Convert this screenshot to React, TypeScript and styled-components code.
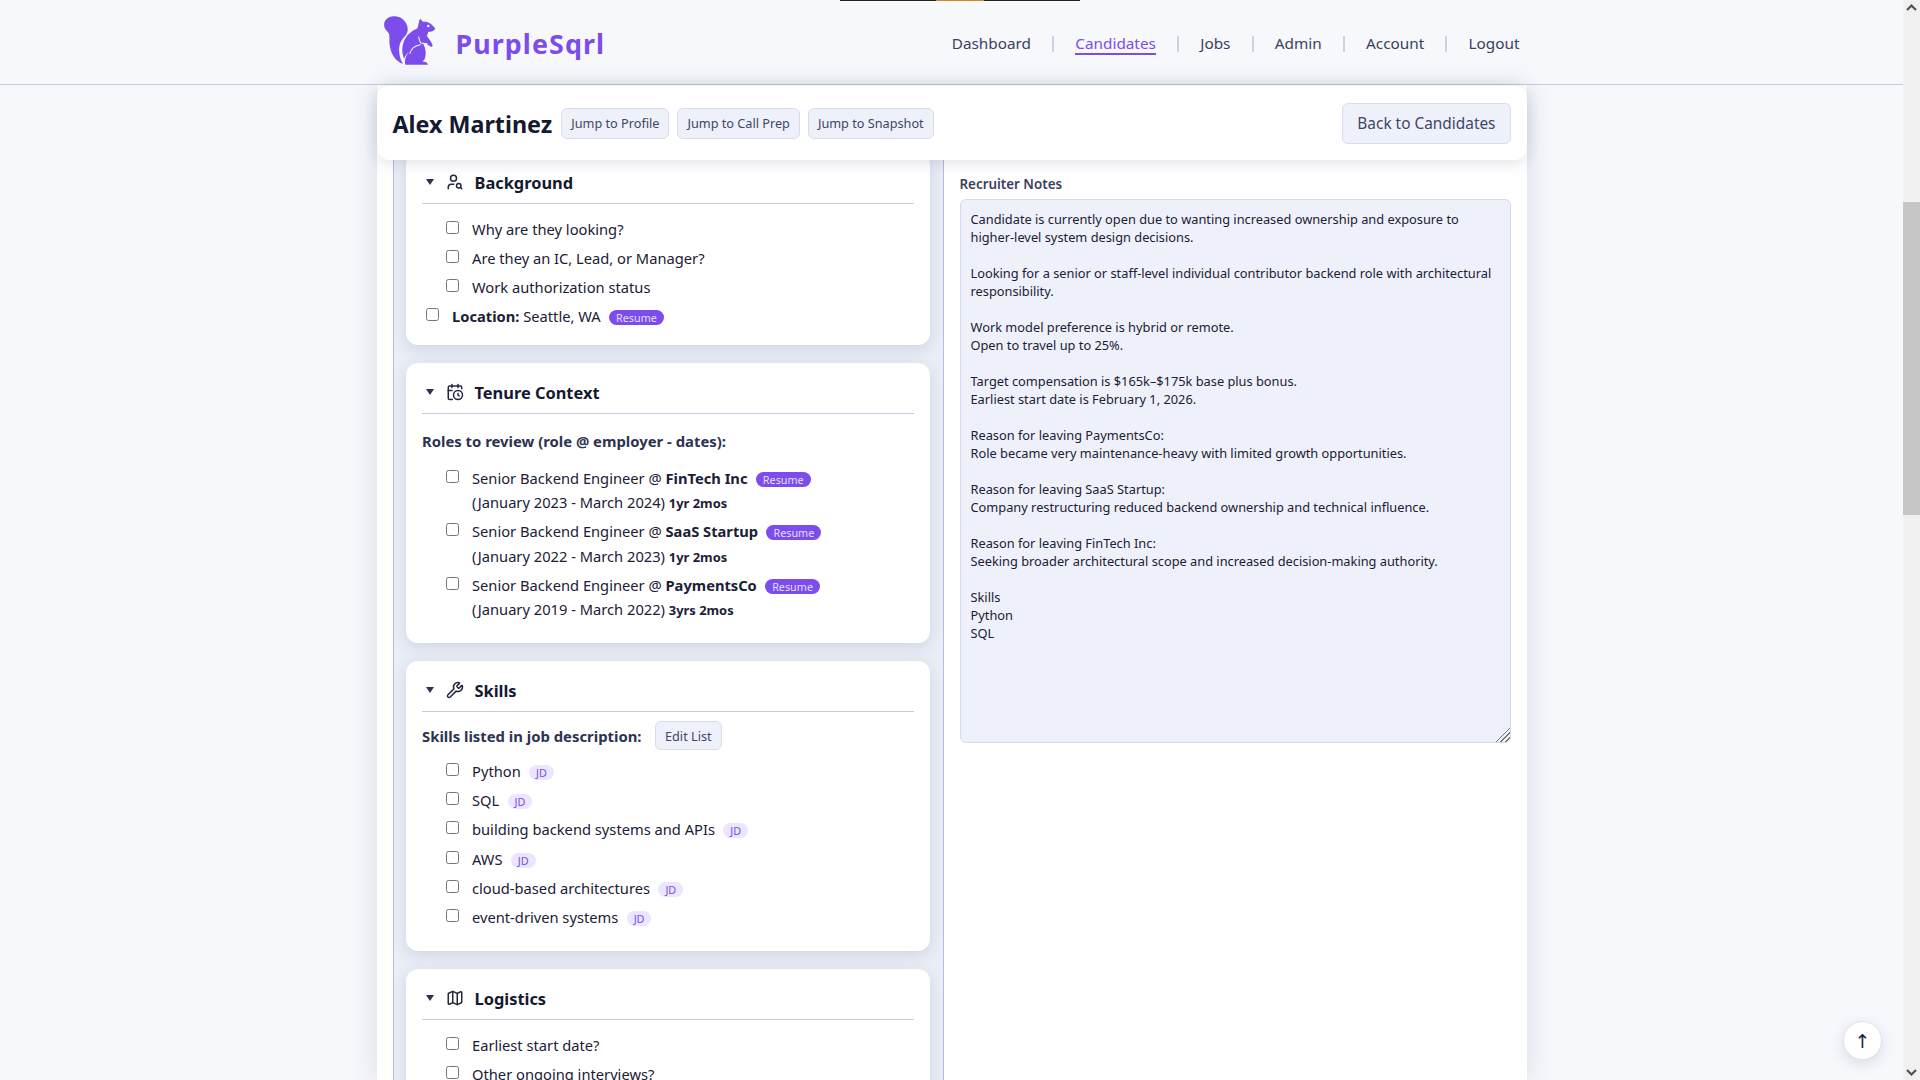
import React from 'react';
import styled, { createGlobalStyle } from 'styled-components';
import { CalendarClock, Map as MapIcon, UserSearch, Wrench } from 'lucide-react';

const GlobalStyle = createGlobalStyle`
  html, body {
    margin: 0;
    height: 100%;
    overflow: hidden;
    background: #f6f8fc;
    font-family: "Noto Sans", "Open Sans", sans-serif;
    color: #1b2036;
  }
`;

const Shell = styled.div`
  display: flex;
  height: 100vh;
`;

const Viewport = styled.div`
  flex: 1;
  min-width: 0;
  display: flex;
  flex-direction: column;
`;

const RecorderBar = styled.div`
  position: absolute;
  top: 0;
  left: 840px;
  width: 240px;
  height: 1px;
  background: linear-gradient(90deg, #222 0 96px, #d08a1d 96px 144px, #222 144px);
`;

const TopBar = styled.header`
  flex: none;
  height: 84px;
  border-bottom: 1px solid #c5cbe3;
  background: #f6f8fc;
`;

const TopBarInner = styled.div`
  max-width: 1136px;
  height: 100%;
  margin: 0 auto;
  display: flex;
  align-items: center;
  justify-content: space-between;
`;

const Brand = styled.div`
  display: flex;
  align-items: center;
  gap: 20px;
  color: #7c4dea;
  margin-top: -4px;
`;

const BrandName = styled.span`
  font-size: 26.8px;
  font-weight: 700;
  letter-spacing: 1.1px;
  margin-top: 6px;
`;

const Nav = styled.nav`
  display: flex;
  align-items: center;
  margin-top: 3px;
`;

const NavLink = styled.a<{ $active?: boolean }>`
  font-size: 15.3px;
  line-height: 20px;
  color: ${(p) => (p.$active ? '#7c4dea' : '#3a4060')};
  border-bottom: 2px solid ${(p) => (p.$active ? '#7c4dea' : 'transparent')};
  cursor: pointer;
`;

const NavDivider = styled.span`
  width: 2px;
  height: 16px;
  margin: 0 21.2px;
  background: #cdd2e6;
`;

const Panel = styled.main`
  flex: 1;
  min-height: 0;
  width: 1150px;
  margin: 0 auto;
  display: flex;
  flex-direction: column;
  background: #fff;
  box-shadow: 0 4px 28px rgba(40, 50, 90, 0.14);
`;

const TitleCard = styled.div`
  flex: none;
  position: relative;
  z-index: 2;
  height: 74px;
  margin-top: 1px;
  padding: 0 16px;
  display: flex;
  align-items: center;
  gap: 8px;
  background: #fff;
  border-radius: 12px;
  box-shadow: 0 2px 16px rgba(40, 50, 90, 0.16);
`;

const CandidateName = styled.h1`
  margin: 2px 1px 0 0;
  font-size: 23.3px;
  font-weight: 700;
  color: #14192f;
`;

const Button = styled.button<{ $size?: 'sm' | 'lg' }>`
  height: ${(p) => (p.$size === 'lg' ? '41px' : p.$size === 'sm' ? '29px' : '31px')};
  margin-left: ${(p) => (p.$size === 'lg' ? 'auto' : '0')};
  padding: 0 ${(p) => (p.$size === 'lg' ? '14px' : '9px')};
  font-family: inherit;
  font-size: ${(p) => (p.$size === 'lg' ? '15.4px' : '12.7px')};
  color: #3f4666;
  background: #eef1f9;
  border: 1px solid #d8ddec;
  border-radius: 6px;
  white-space: nowrap;
`;

const Columns = styled.div`
  flex: 1;
  min-height: 0;
  padding: 0 16px;
  display: flex;
  gap: 16px;
`;

const ChecklistColumn = styled.section`
  flex: none;
  width: 551px;
  box-sizing: border-box;
  padding: 0 12.5px;
  overflow: hidden;
  display: flex;
  flex-direction: column;
  gap: 18.5px;
  background: #eaeef6;
  border-left: 1px solid #b9b6e8;
  border-right: 1px solid #b9b6e8;
`;

const Section = styled.article`
  flex: none;
  padding: 16px 16px 11px;
  background: #fff;
  border-radius: 12px;
  box-shadow: 0 4px 16px rgba(50, 60, 100, 0.14);

  &:first-child {
    margin-top: -7px;
  }
`;

const SectionHeader = styled.div`
  height: 26px;
  padding-bottom: 8px;
  display: flex;
  align-items: center;
  border-bottom: 1px solid #c5cadf;
  color: #232840;
`;

const Caret = styled.span`
  width: 0;
  height: 0;
  margin: 0 11.5px 0 4px;
  border-left: 4px solid transparent;
  border-right: 4px solid transparent;
  border-top: 6px solid #2c3350;
`;

const SectionTitle = styled.h2`
  margin: 0 0 0 11px;
  font-size: 16.4px;
  font-weight: 700;
  color: #14192f;
`;

const Lead = styled.div<{ $tight?: boolean }>`
  display: flex;
  align-items: center;
  gap: 13.5px;
  margin-top: ${(p) => (p.$tight ? '9px' : '15px')};
  min-height: 24px;
  font-size: 14.85px;
  font-weight: 700;
  color: #2c3350;
`;

const List = styled.ul<{ $top?: number }>`
  margin: ${(p) => p.$top ?? 13}px 0 0;
  padding: 0 0 0 20px;
  list-style: none;

  &:last-child {
    margin-bottom: 10.5px;
  }
`;

const Row = styled.li`
  display: flex;
  align-items: flex-start;
  margin-bottom: 5px;
  font-size: 14.7px;
  line-height: 24.16px;
`;

const LooseRow = styled(Row).attrs({ as: 'div' })``;

const Check = styled.input.attrs({ type: 'checkbox' })`
  flex: none;
  width: 13px;
  height: 13px;
  margin: 4px 13px 0 4px;
`;

const Tag = styled.span<{ $kind: 'resume' | 'jd' }>`
  display: inline-block;
  margin-left: 4.5px;
  padding: 0 7px;
  font-size: 10.8px;
  line-height: 15px;
  vertical-align: 0;
  border-radius: 8px;
  color: ${(p) => (p.$kind === 'resume' ? '#e6deff' : '#7c4dea')};
  background: ${(p) => (p.$kind === 'resume' ? '#7c4dea' : '#ebe5fd')};
`;

const Tenure = styled.strong`
  font-size: 12.9px;
  line-height: 1;
`;

const NotesColumn = styled.section`
  flex: none;
  width: 551px;
  padding-top: 14px;
`;

const NotesLabel = styled.label`
  display: block;
  height: 25px;
  line-height: 20px;
  font-size: 13.4px;
  font-weight: 600;
  color: #3a4060;
`;

const NotesArea = styled.textarea`
  display: block;
  width: 100%;
  height: 544px;
  box-sizing: border-box;
  padding: 10px;
  font-family: inherit;
  font-size: 12.8px;
  line-height: 18px;
  color: #1b2036;
  background: #eef1f9;
  border: 1px solid #d5daea;
  border-radius: 6px;
  outline: none;

  &::-webkit-resizer {
    background:
      linear-gradient(135deg, #eef1f9 50%, transparent 50%),
      repeating-linear-gradient(135deg, #777 0 1.500px, #eef1f9 1.500px 3.500px);
  }
`;

const ToTop = styled.button`
  position: absolute;
  left: 1843px;
  top: 1021px;
  width: 39px;
  height: 39px;
  padding: 0;
  font-family: "DejaVu Sans", sans-serif;
  font-size: 19px;
  color: #20263e;
  background: #fff;
  border: 1px solid #dfe3f0;
  border-radius: 50%;
  box-shadow: 0 4px 14px rgba(40, 50, 90, 0.14);
`;

const Scrollbar = styled.div`
  flex: none;
  width: 17px;
  height: 100%;
  display: flex;
  flex-direction: column;
  background: #f1f1f1;
`;

const ScrollArrow = styled.svg`
  flex: none;
  display: block;
  width: 17px;
  height: 17px;
`;

const ScrollTrack = styled.div`
  flex: 1;
`;

const ScrollThumb = styled.div`
  height: 313px;
  margin-top: 185px;
  background: #c6c6c6;
`;

const SquirrelLogo = () => (
  <svg width="52" height="49" viewBox="0 0 150 142" fill="currentColor" aria-hidden="true">
    <path d="M32 1C14-1 0 10 0 26c0 11 8 17 13 23 5 9 0 22 4 40 4 22 15 41 38 50-9-14-13-31-11-49 2-18 12-26 20-36 8-12 5-30-7-42C50 5 42 2 32 1Z" />
    <path d="M104 8l9 9c12-3 25 5 35 19-2 6-10 10-20 10l-4 12c5 8 13 16 17 28l-5 4c-6-6-13-10-24-12 8 14 12 30 5 48l-6 6c8 0 14 2 16 9H62c-4-11 0-26 10-37-6 4-12 12-14 20-6-14-8-32 0-52 6-16 22-30 38-36 4-8 4-20 8-28Z" />
    <circle cx="128" cy="29" r="3.5" fill="#f6f8fc" />
    <path d="M100 60c2 8 3 14 6 18 6 1 14 1 20 3" fill="none" stroke="#f6f8fc" strokeWidth="3" />
    <path d="M74 110c4-16 16-25 32-27" fill="none" stroke="#f6f8fc" strokeWidth="3" />
  </svg>
);

const ChevronUp = () => (
  <ScrollArrow viewBox="0 0 17 17">
    <path d="M4 10l4.500-4.500L13 10" fill="none" stroke="#505050" strokeWidth="2.2" />
  </ScrollArrow>
);

const ChevronDown = () => (
  <ScrollArrow viewBox="0 0 17 17">
    <path d="M4 7l4.500 4.500L13 7" fill="none" stroke="#505050" strokeWidth="2.2" />
  </ScrollArrow>
);

const navItems = ['Dashboard', 'Candidates', 'Jobs', 'Admin', 'Account', 'Logout'];

const roles = [
  { company: 'FinTech Inc', dates: '(January 2023 - March 2024)', span: '1yr 2mos' },
  { company: 'SaaS Startup', dates: '(January 2022 - March 2023)', span: '1yr 2mos' },
  { company: 'PaymentsCo', dates: '(January 2019 - March 2022)', span: '3yrs 2mos' },
];

const skills = [
  'Python',
  'SQL',
  'building backend systems and APIs',
  'AWS',
  'cloud-based architectures',
  'event-driven systems',
];

const notes = `Candidate is currently open due to wanting increased ownership and exposure to higher-level system design decisions.

Looking for a senior or staff-level individual contributor backend role with architectural responsibility.

Work model preference is hybrid or remote.
Open to travel up to 25%.

Target compensation is $165k–$175k base plus bonus.
Earliest start date is February 1, 2026.

Reason for leaving PaymentsCo:
Role became very maintenance-heavy with limited growth opportunities.

Reason for leaving SaaS Startup:
Company restructuring reduced backend ownership and technical influence.

Reason for leaving FinTech Inc:
Seeking broader architectural scope and increased decision-making authority.

Skills
Python
SQL`;

function Heading({ icon, title }: { icon: React.ReactNode; title: string }) {
  return (
    <SectionHeader>
      <Caret />
      {icon}
      <SectionTitle>{title}</SectionTitle>
    </SectionHeader>
  );
}

export default function App(): React.JSX.Element {
  return (
    <Shell>
      <GlobalStyle />
      <Viewport>
        <TopBar>
          <TopBarInner>
            <Brand>
              <SquirrelLogo />
              <BrandName>PurpleSqrl</BrandName>
            </Brand>
            <Nav>
              {navItems.map((item, i) => (
                <React.Fragment key={item}>
                  {i > 0 && <NavDivider />}
                  <NavLink $active={item === 'Candidates'}>{item}</NavLink>
                </React.Fragment>
              ))}
            </Nav>
          </TopBarInner>
        </TopBar>
        <Panel>
          <TitleCard>
            <CandidateName>Alex Martinez</CandidateName>
            <Button>Jump to Profile</Button>
            <Button>Jump to Call Prep</Button>
            <Button>Jump to Snapshot</Button>
            <Button $size="lg">Back to Candidates</Button>
          </TitleCard>
          <Columns>
            <ChecklistColumn>
              <Section>
                <Heading icon={<UserSearch size={18} />} title="Background" />
                <List>
                  <Row><Check />Why are they looking?</Row>
                  <Row><Check />Are they an IC, Lead, or Manager?</Row>
                  <Row><Check />Work authorization status</Row>
                </List>
                <LooseRow>
                  <Check />
                  <span>
                    <strong>Location:</strong> Seattle, WA <Tag $kind="resume">Resume</Tag>
                  </span>
                </LooseRow>
              </Section>
              <Section>
                <Heading icon={<CalendarClock size={18} />} title="Tenure Context" />
                <Lead>Roles to review (role @ employer - dates):</Lead>
                <List>
                  {roles.map((role) => (
                    <Row key={role.company}>
                      <Check />
                      <span>
                        Senior Backend Engineer @ <strong>{role.company}</strong>{' '}
                        <Tag $kind="resume">Resume</Tag>
                        <br />
                        {role.dates} <Tenure>{role.span}</Tenure>
                      </span>
                    </Row>
                  ))}
                </List>
              </Section>
              <Section>
                <Heading icon={<Wrench size={18} />} title="Skills" />
                <Lead $tight>
                  Skills listed in job description:
                  <Button $size="sm">Edit List</Button>
                </Lead>
                <List $top={9}>
                  {skills.map((skill) => (
                    <Row key={skill}>
                      <Check />
                      <span>
                        {skill} <Tag $kind="jd">JD</Tag>
                      </span>
                    </Row>
                  ))}
                </List>
              </Section>
              <Section>
                <Heading icon={<MapIcon size={18} />} title="Logistics" />
                <List>
                  <Row><Check />Earliest start date?</Row>
                  <Row><Check />Other ongoing interviews?</Row>
                </List>
              </Section>
            </ChecklistColumn>
            <NotesColumn>
              <NotesLabel>Recruiter Notes</NotesLabel>
              <NotesArea defaultValue={notes} />
            </NotesColumn>
          </Columns>
        </Panel>
      </Viewport>
      <Scrollbar>
        <ChevronUp />
        <ScrollTrack>
          <ScrollThumb />
        </ScrollTrack>
        <ChevronDown />
      </Scrollbar>
      <RecorderBar />
      <ToTop>↑</ToTop>
    </Shell>
  );
}
